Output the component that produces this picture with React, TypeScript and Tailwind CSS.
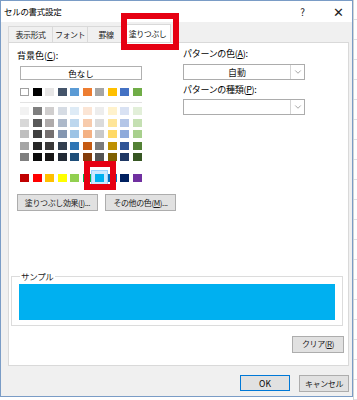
import { ChevronDown } from "lucide-react";

const themeRow = ["#ffffff", "#000000", "#e7e6e6", "#44546a", "#5b9bd5", "#ed7d31", "#a5a5a5", "#ffc000", "#4472c4", "#70ad47"];

const tintRows = [
  ["#f2f2f2", "#7f7f7f", "#d0cece", "#d6dce4", "#deebf6", "#fbe5d5", "#ededed", "#fff2cc", "#d9e2f3", "#e2efd9"],
  ["#d8d8d8", "#595959", "#aeaaaa", "#adb9ca", "#bdd7ee", "#f7cbac", "#dbdbdb", "#fee599", "#b4c6e7", "#c5e0b3"],
  ["#bfbfbf", "#3f3f3f", "#757070", "#8496b0", "#9cc3e5", "#f4b183", "#c9c9c9", "#ffd965", "#8eaadb", "#a8d08d"],
  ["#a5a5a5", "#262626", "#3a3838", "#323f4f", "#2e75b5", "#c55a11", "#7b7b7b", "#bf9000", "#2f5496", "#538135"],
  ["#7f7f7f", "#0c0c0c", "#171616", "#222a35", "#1e4e79", "#833c0b", "#525252", "#7f6000", "#1f3864", "#375623"],
];

const standardRow = ["#c00000", "#ff0000", "#ffc000", "#ffff00", "#92d050", "#00b050", "#00b0f0", "#0070c0", "#002060", "#7030a0"];

const tabs = [
  { label: "表示形式", w: "w-[44px]" },
  { label: "フォント", w: "w-[35px]" },
  { label: "罫線", w: "w-[37px]" },
];

const SwatchRow = ({ colors }: { colors: string[] }) => (
  <div className="flex gap-x-[3.5px]">
    {colors.map((c, i) => (
      <div
        key={i}
        className={`h-[8px] w-[9px] ${c === "#ffffff" ? "border border-[#a0a0a0]" : ""}`}
        style={{ backgroundColor: c }}
      />
    ))}
  </div>
);

const WinButton = ({ children, className = "" }: { children: React.ReactNode; className?: string }) => (
  <div
    className={`flex h-[17px] items-center justify-center whitespace-nowrap border border-[#adadad] bg-[#e1e1e1] text-[8px] tracking-[-0.4px] text-[#1a1a1a] ${className}`}
  >
    {children}
  </div>
);

const Select = ({ value }: { value: string }) => (
  <div className="flex h-[16px] w-[122px] border border-[#acacac] bg-white">
    <div className="flex flex-1 items-center justify-center text-[9px] text-[#1a1a1a]">{value}</div>
    <div className="flex w-[14px] items-center justify-center border-l border-[#d4d4d4]">
      <ChevronDown size={10} strokeWidth={1.5} className="text-[#707070]" />
    </div>
  </div>
);

export default function App() {
  return (
    <div className="relative flex h-[400px] w-[357px] overflow-hidden bg-white font-['Noto_Sans_CJK_JP','Noto_Sans',sans-serif] leading-none text-black">
      {/* dialog */}
      <div className="flex h-[397px] w-[353px] flex-col border border-[#7a9cc6] bg-[#f0f0f0]">
        {/* title bar */}
        <div className="flex h-[21px] shrink-0 items-center bg-white pl-[3px]">
          <span className="text-[8.5px] tracking-[-0.3px]">セルの書式設定</span>
          <span className="ml-auto mr-[28px] text-[10px] text-[#222]">?</span>
          <span className="mr-[8px] text-[13px] font-light text-[#222]">✕</span>
        </div>

        {/* tabs */}
        <div className="ml-[7px] mt-[2px] flex h-[18px] items-end">
          {tabs.map((t) => (
            <div
              key={t.label}
              className={`flex h-[16px] ${t.w} items-center justify-center whitespace-nowrap border-l border-t border-[#d9d9d9] text-[8px] tracking-[-0.5px] text-[#222]`}
            >
              {t.label}
            </div>
          ))}
          <div className="relative -mb-px flex h-[19px] w-[47px] items-center justify-center whitespace-nowrap border-x border-t border-[#d9d9d9] bg-white text-[8px] tracking-[-0.5px] text-[#111]">
            塗りつぶし
          </div>
        </div>

        {/* panel */}
        <div className="relative ml-[7px] flex h-[324px] w-[341px] flex-col border border-[#d9d9d9] bg-white">
          <div className="flex">
            {/* left column */}
            <div className="w-[174px] pl-[8px] pt-[8px]">
              <div className="h-[11px] text-[9px]">
                背景色(<span className="underline">C</span>):
              </div>
              <div className="ml-[3px] mt-[4px] flex h-[14px] w-[122px] items-center justify-center border border-[#b0b0b0] text-[8.5px]">
                色なし
              </div>
              <div className="relative ml-[3px] mt-[8px] w-[122px]">
                <SwatchRow colors={themeRow} />
                <div className="mt-[6px] h-px w-[122px] bg-[#e3e3e3]" />
                <div className="mt-[4px] flex flex-col gap-y-[3.5px]">
                  {tintRows.map((r, i) => (
                    <SwatchRow key={i} colors={r} />
                  ))}
                </div>
                <div className="relative mt-[13px]">
                  <SwatchRow colors={standardRow} />
                  {/* selection frame */}
                  <div className="absolute left-[71px] top-[-4px] h-[16px] w-[17px] border border-[#99d1ff] bg-[#cce8ff]">
                    <div className="ml-[3px] mt-[3px] h-[8px] w-[9px] bg-[#00b0f0]" />
                  </div>
                  {/* red highlight */}
                  <div className="absolute left-[64px] top-[-13px] h-[29px] w-[32px] border-[6px] border-[#e60012]" />
                </div>
              </div>
              <div className="mt-[12px] flex gap-[7px]">
                <WinButton className="w-[81px]">
                  塗りつぶし効果(<span className="underline">I</span>)...
                </WinButton>
                <WinButton className="w-[71px]">
                  その他の色(<span className="underline">M</span>)...
                </WinButton>
              </div>
            </div>

            {/* right column */}
            <div className="pt-[6px]">
              <div className="h-[11px] text-[9px] tracking-[-0.3px]">
                パターンの色(<span className="underline">A</span>):
              </div>
              <div className="mt-[4px]">
                <Select value="自動" />
              </div>
              <div className="mt-[5px] h-[11px] text-[9px] tracking-[-0.3px]">
                パターンの種類(<span className="underline">P</span>):
              </div>
              <div className="mt-[3px]">
                <Select value="" />
              </div>
            </div>
          </div>

          {/* sample */}
          <fieldset className="ml-[2px] mt-[61px] w-[332px] border border-[#dcdcdc] px-[7px] pb-[5px]">
            <legend className="ml-[1px] px-[1px] text-[8.5px] tracking-[-0.3px] text-[#222]">サンプル</legend>
            <div className="mt-[3px] h-[36px] w-[316px] bg-[#00b0f0]" />
          </fieldset>

          <div className="mr-[4px] mt-[10px] flex justify-end">
            <WinButton className="h-[16px] w-[52px]">
              クリア(<span className="underline">R</span>)
            </WinButton>
          </div>
        </div>

        {/* footer */}
        <div className="mr-[3px] mt-[9px] flex justify-end gap-[9px]">
          <div className="flex h-[16px] w-[50px] items-center justify-center border border-[#0078d7] bg-[#e1e1e1] text-[8.5px]">
            OK
          </div>
          <WinButton className="h-[16px] w-[50px]">キャンセル</WinButton>
        </div>
      </div>

      {/* spreadsheet peeking on the right */}
      <div className="flex flex-1 flex-col border-l border-[#d4d4d4] bg-white">
        {Array.from({ length: 20 }).map((_, i) => (
          <div key={i} className="h-[20px] border-b border-[#e1e1e1]" />
        ))}
      </div>

      {/* red highlight on the active tab */}
      <div className="absolute left-[121px] top-[13px] h-[37px] w-[58px] border-[6px] border-[#e60012]" />
    </div>
  );
}
